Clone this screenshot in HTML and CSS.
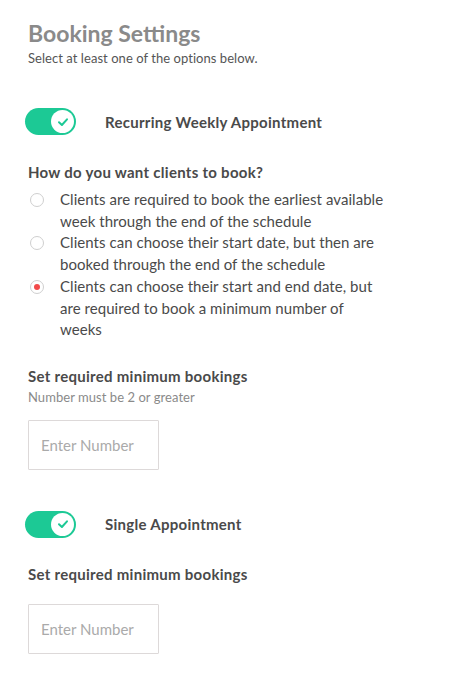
FILE: index.html
```html
<!DOCTYPE html>
<html>
<head>
<meta charset="utf-8">
<link rel="stylesheet" href="styles.css">
</head>
<body>
<div class="page">
  <h1 class="title">Booking Settings</h1>
  <p class="subtitle">Select at least one of the options below.</p>

  <div class="toggle-row first">
    <span class="toggle"><span class="knob"><svg width="14" height="14" viewBox="0 0 14 14"><path d="M3 7.3 L5.9 10 L11 4.3" fill="none" stroke="#1cc995" stroke-width="2" stroke-linecap="round" stroke-linejoin="round"/></svg></span></span>
    <span class="toggle-label">Recurring Weekly Appointment</span>
  </div>

  <h2 class="question">How do you want clients to book?</h2>
  <ul class="radios">
    <li class="radio-item"><span class="radio"></span><span class="radio-text">Clients are required to book the earliest available week through the end of the schedule</span></li>
    <li class="radio-item"><span class="radio"></span><span class="radio-text">Clients can choose their start date, but then are booked through the end of the schedule</span></li>
    <li class="radio-item"><span class="radio checked"></span><span class="radio-text">Clients can choose their start and end date, but are required to book a minimum number of weeks</span></li>
  </ul>

  <h2 class="field-label first-field">Set required minimum bookings</h2>
  <p class="hint">Number must be 2 or greater</p>
  <input class="number-input" type="text" placeholder="Enter Number">

  <div class="toggle-row second">
    <span class="toggle"><span class="knob"><svg width="14" height="14" viewBox="0 0 14 14"><path d="M3 7.3 L5.9 10 L11 4.3" fill="none" stroke="#1cc995" stroke-width="2" stroke-linecap="round" stroke-linejoin="round"/></svg></span></span>
    <span class="toggle-label">Single Appointment</span>
  </div>

  <h2 class="field-label second-field">Set required minimum bookings</h2>
  <input class="number-input" type="text" placeholder="Enter Number">
</div>
</body>
</html>
```

FILE: styles.css
```css
* { box-sizing: border-box; }
html, body { margin: 0; padding: 0; background: #fff; }
body { font-family: Lato, "Open Sans", sans-serif; color: #454545; }
.page { padding: 18px 20px 20px 28px; display: flex; flex-direction: column; align-items: flex-start; }
.title { margin: 0; font-size: 23px; line-height: 30px; font-weight: 700; color: #8a8a8a; letter-spacing: 0; }
.subtitle { margin: 2px 0 0; font-size: 13px; line-height: 16px; color: #555; letter-spacing: 0.05px; }
.toggle-row { display: flex; align-items: center; margin-left: -3px; }
.toggle-row.first { margin-top: 42px; }
.toggle-row.second { margin-top: 41px; }
.toggle { width: 51px; height: 27px; border-radius: 14px; background: #1cc995; position: relative; display: block; }
.knob { position: absolute; right: 2px; top: 2px; width: 23px; height: 23px; border-radius: 50%; background: #fff; display: flex; align-items: center; justify-content: center; }
.knob svg { display: block; }
.toggle-label { margin-left: 29px; font-size: 15px; font-weight: 700; color: #4a4a4a; letter-spacing: 0.28px; }
.question { margin: 27px 0 0; font-size: 15px; line-height: 20px; font-weight: 700; color: #4a4a4a; letter-spacing: 0.28px; }
.radios { list-style: none; margin: 7px 0 0; padding: 0; width: 360px; }
.radio-item { display: flex; align-items: flex-start; font-size: 15px; line-height: 21.7px; color: #4a4a4a; letter-spacing: 0.05px; }
.radio { flex: 0 0 14px; width: 14px; height: 14px; border-radius: 50%; border: 1px solid #cfcfcf; margin: 4px 16px 0 2px; display: flex; align-items: center; justify-content: center; }
.radio.checked::after { content: ""; width: 6px; height: 6px; border-radius: 50%; background: #f24a4a; }
.radio-text { flex: 1; }
.field-label { margin: 0; font-size: 15px; line-height: 20px; font-weight: 700; color: #4a4a4a; letter-spacing: 0.28px; }
.field-label.first-field { margin-top: 25px; }
.field-label.second-field { margin-top: 26px; }
.hint { margin: 3px 0 0; font-size: 13px; line-height: 16px; color: #8a8a8a; letter-spacing: 0.05px; }
.number-input { display: block; width: 131px; height: 50px; border: 1px solid #ddd9d9; border-radius: 1px; padding: 0 12px; font-family: inherit; font-size: 15px; color: #444; margin-top: 15px; outline: none; }
.number-input::placeholder { color: #aaa; }
.second-field + .number-input { margin-top: 20px; }
```
